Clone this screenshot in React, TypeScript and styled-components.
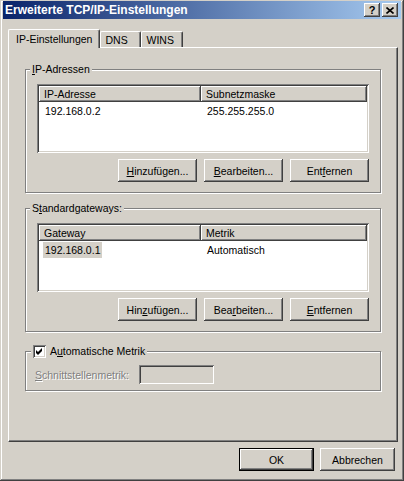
import styled, { createGlobalStyle } from "styled-components";

const GlobalStyle = createGlobalStyle`
  html, body {
    margin: 0;
    padding: 0;
    background: #d4d0c8;
  }
  body {
    font-family: "Liberation Sans", Arial, sans-serif;
    font-size: 10.5px;
    color: #000;
  }
  * {
    box-sizing: border-box;
  }
`;

const raised = `
  box-shadow: inset -1px -1px #404040, inset 1px 1px #ffffff,
    inset -2px -2px #808080, inset 2px 2px #d4d0c8;
`;

const sunken = `
  box-shadow: inset 1px 1px #808080, inset -1px -1px #ffffff,
    inset 2px 2px #404040, inset -2px -2px #d4d0c8;
`;

const Window = styled.div`
  width: 404px;
  height: 481px;
  display: flex;
  flex-direction: column;
  padding: 1px 3px 3px;
  background: #d4d0c8;
  box-shadow: inset -1px -1px #404040, inset 1px 1px #d4d0c8,
    inset -2px -2px #808080, inset 2px 2px #ffffff;
`;

const TitleBar = styled.div`
  height: 18px;
  display: flex;
  align-items: center;
  padding: 0 3px 0 2px;
  background: linear-gradient(to right, #0a246a, #a6caf0);
  color: #fff;
  font-weight: bold;
  font-size: 12px;
`;

const TitleText = styled.span`
  flex: 1;
  white-space: nowrap;
`;

const CaptionButtons = styled.div`
  display: flex;
  gap: 2px;
`;

const CaptionButton = styled.div`
  width: 16px;
  height: 14px;
  display: flex;
  align-items: center;
  justify-content: center;
  background: #d4d0c8;
  color: #000;
  font-size: 11px;
  font-weight: bold;
  ${raised}
`;

const Body = styled.div`
  flex: 1;
  display: flex;
  flex-direction: column;
  padding: 10px 3px 0 5px;
`;

const TabRow = styled.div`
  display: flex;
  align-items: flex-end;
  height: 19px;
  margin-bottom: -1px;
  position: relative;
  z-index: 1;
`;

const Tab = styled.div<{ $active?: boolean; $width?: number }>`
  height: ${(p) => (p.$active ? 19 : 16)}px;
  margin-bottom: ${(p) => (p.$active ? 0 : 1)}px;
  min-width: ${(p) => p.$width ?? 0}px;
  padding: 0 ${(p) => (p.$active ? 7 : 4)}px;
  display: flex;
  align-items: center;
  white-space: nowrap;
  background: #d4d0c8;
  border-top: 1px solid #fff;
  border-left: 1px solid #fff;
  border-right: 1px solid #404040;
  border-radius: 2px 2px 0 0;
  box-shadow: inset -1px 0 #808080;
`;

const Panel = styled.div`
  flex: 1;
  display: flex;
  flex-direction: column;
  padding: 15px 16px 0 16px;
  border: 1px solid;
  border-color: #fff #404040 #404040 #fff;
  box-shadow: inset -1px -1px #808080;
`;

const Group = styled.fieldset<{ $gap?: number; $pad?: string }>`
  margin: ${(p) => p.$gap ?? 0}px 0 0 0;
  padding: ${(p) => p.$pad ?? "8px 11px 10px 11px"};
  border: 1px solid #808080;
  box-shadow: inset 1px 1px #fff, 1px 1px #fff;
  min-width: 0;
`;

const Legend = styled.legend<{ $shift?: number }>`
  display: flex;
  align-items: center;
  height: 13px;
  line-height: 13px;
  padding: 0 2px;
  margin-left: ${(p) => p.$shift ?? -7}px;
  background: #d4d0c8;
`;

const Key = styled.span`
  text-decoration: underline;
  text-underline-offset: 1px;
`;

const ListView = styled.div`
  height: 69px;
  padding: 2px;
  background: #fff;
  ${sunken}
`;

const Columns = styled.div`
  display: grid;
  grid-template-columns: 162px 1fr;
`;

const HeaderCell = styled.div`
  height: 16px;
  line-height: 16px;
  padding-left: 5px;
  background: #d4d0c8;
  box-shadow: inset -1px -1px #404040, inset 1px 1px #ffffff,
    inset -2px -2px #808080;
`;

const Rows = styled.div`
  padding-top: 1px;
`;

const Cell = styled.div`
  height: 16px;
  line-height: 16px;
  padding-left: 4px;
`;

const CellText = styled.span<{ $selected?: boolean }>`
  display: inline-block;
  padding: 0 2px;
  background: ${(p) => (p.$selected ? "#d4d0c8" : "transparent")};
`;

const ButtonRow = styled.div`
  display: flex;
  justify-content: flex-end;
  gap: 7px;
  margin-top: 6px;
`;

const Button = styled.div<{ $width?: number; $default?: boolean }>`
  width: ${(p) => p.$width ?? 79}px;
  height: 23px;
  display: flex;
  align-items: center;
  justify-content: center;
  background: #d4d0c8;
  ${(p) =>
    p.$default
      ? `box-shadow: inset 0 0 0 1px #000, inset -2px -2px #404040,
          inset 2px 2px #ffffff, inset -3px -3px #808080;`
      : raised}
`;

const Checkbox = styled.div`
  width: 13px;
  height: 13px;
  background: #fff;
  ${sunken}
  display: flex;
`;

const CheckLabel = styled.span`
  margin-left: 4px;
  white-space: nowrap;
`;

const MetricRow = styled.div`
  display: flex;
  align-items: center;
  gap: 6px;
`;

const DisabledLabel = styled.span`
  width: 98px;
  color: #808080;
  text-shadow: 1px 1px 0 #fff;
  white-space: nowrap;
`;

const DisabledInput = styled.div`
  width: 75px;
  height: 19px;
  background: #d4d0c8;
  ${sunken}
`;

const Footer = styled.div`
  display: flex;
  justify-content: flex-end;
  gap: 6px;
  margin: 6px 3px 7px 0;
`;

type Row = { cells: string[]; selected?: boolean };

const AddressList = ({ headers, rows }: { headers: string[]; rows: Row[] }) => (
  <ListView>
    <Columns>
      {headers.map((h) => (
        <HeaderCell key={h}>{h}</HeaderCell>
      ))}
    </Columns>
    <Rows>
      {rows.map((r) => (
        <Columns key={r.cells[0]}>
          {r.cells.map((c, i) => (
            <Cell key={c}>
              <CellText $selected={r.selected && i === 0}>{c}</CellText>
            </Cell>
          ))}
        </Columns>
      ))}
    </Rows>
  </ListView>
);

const CloseGlyph = () => (
  <svg width="8" height="7" viewBox="0 0 8 7">
    <path d="M0.5 0.5 L7.5 6.5 M7.5 0.5 L0.5 6.5" stroke="#000" strokeWidth="1.6" />
  </svg>
);

const CheckGlyph = () => (
  <svg width="13" height="13" viewBox="0 0 13 13">
    <polygon points="3,5 5,7 9,3 9,6 5,10 3,8" fill="#000" />
  </svg>
);

const App = () => (
  <>
    <GlobalStyle />
    <Window>
      <TitleBar>
        <TitleText>Erweiterte TCP/IP-Einstellungen</TitleText>
        <CaptionButtons>
          <CaptionButton>?</CaptionButton>
          <CaptionButton>
            <CloseGlyph />
          </CaptionButton>
        </CaptionButtons>
      </TitleBar>

      <Body>
        <TabRow>
          <Tab $active>IP-Einstellungen</Tab>
          <Tab $width={41}>DNS</Tab>
          <Tab $width={42}>WINS</Tab>
        </TabRow>

        <Panel>
          <Group>
            <Legend>
              <span>
                <Key>I</Key>P-Adressen
              </span>
            </Legend>
            <AddressList
              headers={["IP-Adresse", "Subnetzmaske"]}
              rows={[{ cells: ["192.168.0.2", "255.255.255.0"] }]}
            />
            <ButtonRow>
              <Button>
                <span>
                  <Key>H</Key>inzufügen...
                </span>
              </Button>
              <Button>
                <span>
                  <Key>B</Key>earbeiten...
                </span>
              </Button>
              <Button>
                <span>
                  Ent<Key>f</Key>ernen
                </span>
              </Button>
            </ButtonRow>
          </Group>

          <Group $gap={9}>
            <Legend>
              <span>
                S<Key>t</Key>andardgateways:
              </span>
            </Legend>
            <AddressList
              headers={["Gateway", "Metrik"]}
              rows={[{ cells: ["192.168.0.1", "Automatisch"], selected: true }]}
            />
            <ButtonRow>
              <Button>
                <span>
                  Hin<Key>z</Key>ufügen...
                </span>
              </Button>
              <Button>
                <span>
                  Bea<Key>r</Key>beiten...
                </span>
              </Button>
              <Button>
                <span>
                  <Key>E</Key>ntfernen
                </span>
              </Button>
            </ButtonRow>
          </Group>

          <Group $gap={13} $pad="7px 9px 6px 9px">
            <Legend $shift={-4}>
              <Checkbox>
                <CheckGlyph />
              </Checkbox>
              <CheckLabel>
                A<Key>u</Key>tomatische Metrik
              </CheckLabel>
            </Legend>
            <MetricRow>
              <DisabledLabel>
                <Key>S</Key>chnittstellenmetrik:
              </DisabledLabel>
              <DisabledInput />
            </MetricRow>
          </Group>
        </Panel>

        <Footer>
          <Button $width={75} $default>
            OK
          </Button>
          <Button $width={75}>Abbrechen</Button>
        </Footer>
      </Body>
    </Window>
  </>
);

export default App;
